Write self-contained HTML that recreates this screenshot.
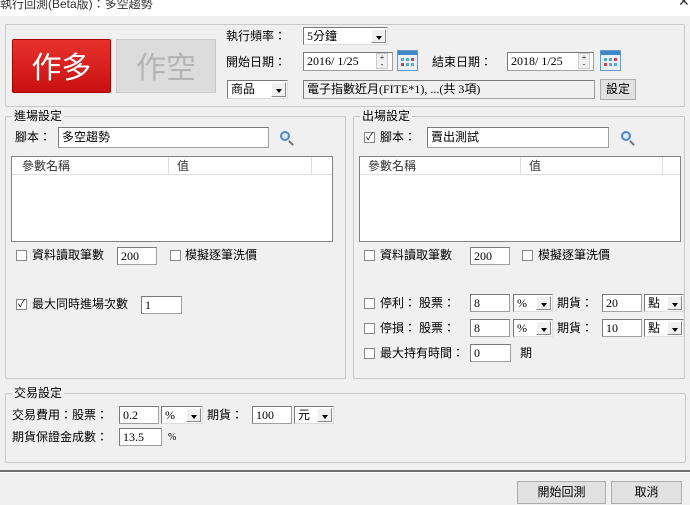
<!DOCTYPE html>
<html><head><meta charset="utf-8"><style>
*{box-sizing:border-box;margin:0;padding:0}
body{width:690px;height:505px;background:#f0f0f0;position:relative;overflow:hidden;font:12px "Liberation Serif","Noto Sans CJK TC",serif;color:#000}
.a{position:absolute;white-space:nowrap}
.t{position:absolute;white-space:nowrap;line-height:14px}
.grp{position:absolute;border:1px solid #c8c8c8;border-radius:2px}
.gl{position:absolute;background:#f0f0f0;padding:0 2px;line-height:14px;top:-8px;left:6px}
.in{position:absolute;background:#fff;border:1px solid #a0a0a0;border-top-color:#7a7a7a;border-left-color:#7a7a7a;line-height:16px;padding-left:3px;font-size:12px}
.sel{position:absolute;background:#fff;border:1px solid #7a7a7a;border-right-color:#ddd;border-bottom-color:#ddd;line-height:16px;padding-left:3px}
.sel b{position:absolute;right:1px;top:1px;bottom:1px;width:15px;background:#f0f0f0;border:1px solid #fff;border-right-color:#888;border-bottom-color:#888}
.sel b:after{content:"";position:absolute;left:4px;top:6px;border:3px solid transparent;border-top:4px solid #000}
.cb{position:absolute;width:11px;height:11px;background:#fff;border:1px solid #888;font-size:10px;line-height:9px;text-align:center}
.btn{position:absolute;background:#e1e1e1;border:1px solid #adadad;text-align:center}
.cal{position:absolute;width:21px;height:21px;background:linear-gradient(#3d86c6 0 4px,#e8f0f8 4px);border:1px solid #6a9acb}
.cal i{position:absolute;width:3px;height:3px;background:#5aa8d8}
.mag{position:absolute;width:10px;height:10px;border:2px solid #4a8ac8;border-radius:50%;background:#dbeaf7}
.mag:after{content:"";position:absolute;width:6px;height:2px;background:#777;transform:rotate(45deg);left:6px;top:9px}
.list{position:absolute;background:#fff;border:1px solid #828282}
.list .h{position:absolute;top:0;left:0;right:0;height:18px;border-bottom:1px solid #e0e0e0;color:#333;line-height:18px}
.spin{position:absolute;width:12px;height:16px;background:#f0f0f0;border:1px solid #ccc;font-size:8px;line-height:7px;text-align:center}
</style></head><body>
<div class="a" style="left:0;top:0;width:690px;height:16px;background:#fff"></div>
<div class="t" style="left:0;top:-3px;font-size:12px;color:#333;font-family:'Liberation Sans','Noto Sans CJK TC',sans-serif">執行回測(Beta版)：多空趨勢</div>
<div class="t" style="left:678px;top:-4px;font-size:14px;color:#333">✕</div>

<div class="grp" style="left:5px;top:24px;width:680px;height:83px"></div>
<div class="a" style="left:12px;top:39px;width:99px;height:54px;background:linear-gradient(#e8322e,#c81010);border:1px solid #a00;border-radius:2px;color:#fff;font-size:30px;line-height:50px;text-align:center;font-family:'Noto Sans CJK TC',sans-serif">作多</div>
<div class="a" style="left:116px;top:39px;width:100px;height:54px;background:#dcdcdc;border:1px solid #c8c8c8;color:#b4b4b4;font-size:30px;line-height:50px;text-align:center;font-family:'Noto Sans CJK TC',sans-serif">作空</div>
<div class="t" style="left:226px;top:29px">執行頻率：</div>
<div class="sel" style="left:303px;top:27px;width:85px;height:18px">5分鐘<b></b></div>
<div class="t" style="left:226px;top:55px">開始日期：</div>
<div class="in" style="left:303px;top:52px;width:90px;height:19px">2016/ 1/25</div>
<div class="spin" style="left:376px;top:53px">+<br>-</div>
<div class="cal" style="left:397px;top:50px"><i style="left:3px;top:7px"></i><i style="left:8px;top:7px"></i><i style="left:13px;top:7px;background:#d04040"></i><i style="left:3px;top:12px;background:#d04040"></i><i style="left:8px;top:12px"></i><i style="left:13px;top:12px"></i></div>
<div class="t" style="left:432px;top:55px">結束日期：</div>
<div class="in" style="left:507px;top:52px;width:87px;height:19px">2018/ 1/25</div>
<div class="spin" style="left:578px;top:53px">+<br>-</div>
<div class="cal" style="left:600px;top:50px"><i style="left:3px;top:7px"></i><i style="left:8px;top:7px"></i><i style="left:13px;top:7px;background:#d04040"></i><i style="left:3px;top:12px;background:#d04040"></i><i style="left:8px;top:12px"></i><i style="left:13px;top:12px"></i></div>
<div class="sel" style="left:227px;top:80px;width:61px;height:19px">商品<b></b></div>
<div class="in" style="left:303px;top:80px;width:292px;height:19px;background:#f0f0f0">電子指數近月(FITE*1), ...(共 3項)</div>
<div class="btn" style="left:600px;top:79px;width:36px;height:21px;line-height:19px">設定</div>

<div class="grp" style="left:5px;top:116px;width:341px;height:263px"><span class="gl">進場設定</span></div>
<div class="t" style="left:15px;top:130px">腳本：</div>
<div class="in" style="left:58px;top:127px;width:211px;height:21px;line-height:18px">多空趨勢</div>
<div class="mag" style="left:280px;top:131px"></div>
<div class="list" style="left:11px;top:156px;width:322px;height:86px"><div class="h"><span class="a" style="left:10px">參數名稱</span><span class="a" style="left:156px;top:0;height:18px;border-left:1px solid #e0e0e0;padding-left:8px">值</span><span class="a" style="left:299px;top:0;height:18px;border-left:1px solid #e0e0e0"></span></div></div>
<div class="cb" style="left:16px;top:250px"></div><div class="t" style="left:32px;top:248px">資料讀取筆數</div>
<div class="in" style="left:117px;top:247px;width:40px;height:18px">200</div>
<div class="cb" style="left:170px;top:250px"></div><div class="t" style="left:185px;top:248px">模擬逐筆洗價</div>
<div class="cb" style="left:16px;top:299px">✓</div><div class="t" style="left:32px;top:297px">最大同時進場次數</div>
<div class="in" style="left:141px;top:296px;width:41px;height:18px">1</div>

<div class="grp" style="left:353px;top:116px;width:332px;height:263px"><span class="gl">出場設定</span></div>
<div class="cb" style="left:364px;top:132px">✓</div><div class="t" style="left:380px;top:130px">腳本：</div>
<div class="in" style="left:427px;top:127px;width:182px;height:21px;line-height:18px">賣出測試</div>
<div class="mag" style="left:621px;top:131px"></div>
<div class="list" style="left:359px;top:156px;width:322px;height:86px"><div class="h"><span class="a" style="left:8px">參數名稱</span><span class="a" style="left:160px;top:0;height:18px;border-left:1px solid #e0e0e0;padding-left:8px">值</span><span class="a" style="left:302px;top:0;height:18px;border-left:1px solid #e0e0e0"></span></div></div>
<div class="cb" style="left:364px;top:250px"></div><div class="t" style="left:380px;top:248px">資料讀取筆數</div>
<div class="in" style="left:470px;top:247px;width:40px;height:18px">200</div>
<div class="cb" style="left:522px;top:250px"></div><div class="t" style="left:538px;top:248px">模擬逐筆洗價</div>

<div class="cb" style="left:364px;top:298px"></div><div class="t" style="left:380px;top:296px">停利： 股票：</div>
<div class="in" style="left:470px;top:294px;width:40px;height:18px">8</div>
<div class="sel" style="left:513px;top:294px;width:40px;height:18px">%<b></b></div>
<div class="t" style="left:557px;top:296px">期貨：</div>
<div class="in" style="left:602px;top:294px;width:40px;height:18px">20</div>
<div class="sel" style="left:644px;top:294px;width:40px;height:18px">點<b></b></div>
<div class="cb" style="left:364px;top:323px"></div><div class="t" style="left:380px;top:321px">停損： 股票：</div>
<div class="in" style="left:470px;top:319px;width:40px;height:18px">8</div>
<div class="sel" style="left:513px;top:319px;width:40px;height:18px">%<b></b></div>
<div class="t" style="left:557px;top:321px">期貨：</div>
<div class="in" style="left:602px;top:319px;width:40px;height:18px">10</div>
<div class="sel" style="left:644px;top:319px;width:40px;height:18px">點<b></b></div>
<div class="cb" style="left:364px;top:348px"></div><div class="t" style="left:380px;top:346px">最大持有時間：</div>
<div class="in" style="left:470px;top:344px;width:41px;height:18px">0</div>
<div class="t" style="left:520px;top:346px">期</div>

<div class="grp" style="left:5px;top:393px;width:681px;height:70px"><span class="gl">交易設定</span></div>
<div class="t" style="left:12px;top:408px">交易費用：股票：</div>
<div class="in" style="left:119px;top:406px;width:40px;height:18px">0.2</div>
<div class="sel" style="left:161px;top:406px;width:42px;height:18px">%<b></b></div>
<div class="t" style="left:207px;top:408px">期貨：</div>
<div class="in" style="left:252px;top:406px;width:40px;height:18px">100</div>
<div class="sel" style="left:294px;top:406px;width:40px;height:18px">元<b></b></div>
<div class="t" style="left:12px;top:430px">期貨保證金成數：</div>
<div class="in" style="left:119px;top:428px;width:43px;height:18px">13.5</div>
<div class="t" style="left:168px;top:431px;font-size:10px">%</div>

<div class="a" style="left:0;top:470px;width:690px;height:3px;background:#707070;border-bottom:1px solid #fff"></div>
<div class="btn" style="left:517px;top:481px;width:89px;height:23px;line-height:21px">開始回測</div>
<div class="btn" style="left:611px;top:481px;width:71px;height:23px;line-height:21px">取消</div>
</body></html>
